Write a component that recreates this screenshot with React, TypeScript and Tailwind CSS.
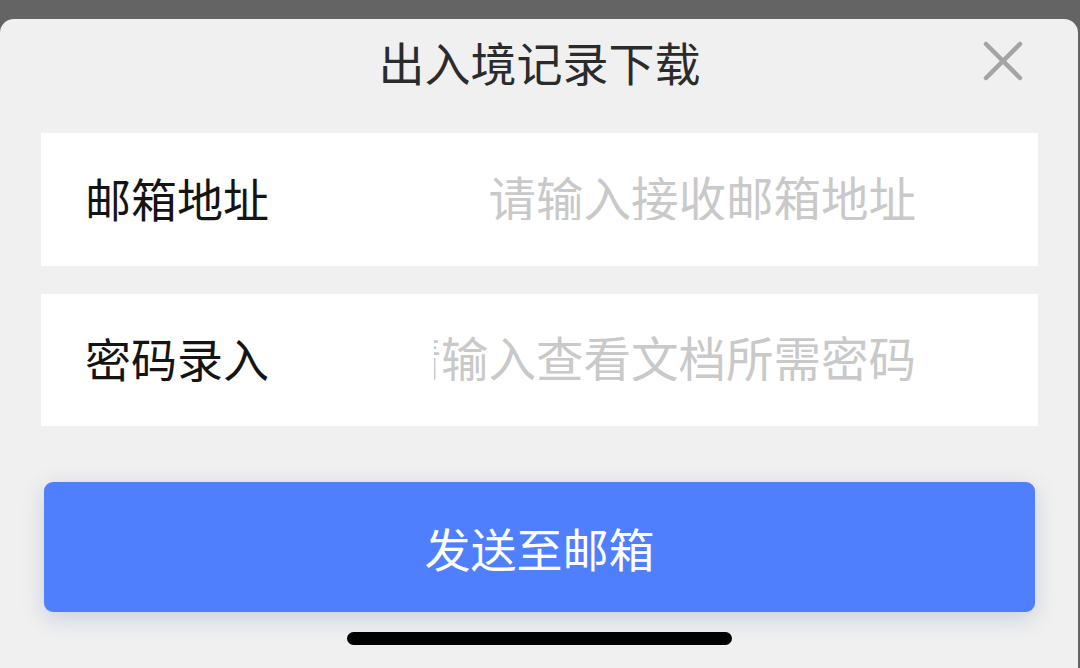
import React from "react";

const font = { fontFamily: '"Noto Sans CJK SC", "Noto Sans", sans-serif' };

function Row({ label, placeholder }: { label: string; placeholder: string }) {
  return (
    <div className="flex items-center bg-white h-full pb-[6px]">
      <div className="pl-[44px] text-[46px] leading-none text-[#141414] whitespace-nowrap">{label}</div>
      <div className="ml-auto mr-[122px] w-[482px] overflow-hidden flex justify-end">
        <span className="text-[47.5px] leading-none text-[#c9c9c9] whitespace-nowrap shrink-0">{placeholder}</span>
      </div>
    </div>
  );
}

export default function App() {
  return (
    <div className="w-[1080px] h-[668px] bg-[#646464] pt-[19px] overflow-hidden" style={font}>
      <div className="w-[1078px] h-[663px] bg-[#f0f0f0] rounded-[14px] pl-[41px] pr-[40px] flex flex-col">
        <div className="h-[84px] relative flex items-center justify-center shrink-0">
          <div className="text-[46px] leading-none text-[#2b2b2b]">出入境记录下载</div>
          <svg
            className="absolute right-[15px] top-[22px]"
            width="40"
            height="40"
            viewBox="0 0 40 40"
          >
            <line x1="3" y1="3" x2="37" y2="37" stroke="#a4a4a4" strokeWidth="4.5" strokeLinecap="round" />
            <line x1="37" y1="3" x2="3" y2="37" stroke="#a4a4a4" strokeWidth="4.5" strokeLinecap="round" />
          </svg>
        </div>
        <div className="mt-[30px] h-[133px] shrink-0">
          <Row label="邮箱地址" placeholder="请输入接收邮箱地址" />
        </div>
        <div className="mt-[28px] h-[132px] shrink-0">
          <Row label="密码录入" placeholder="请输入查看文档所需密码" />
        </div>
        <div className="mt-[56px] mx-[3px] h-[130px] shrink-0 rounded-[9px] bg-[#507ffe] shadow-[0_6px_22px_rgba(70,90,150,0.22)] flex items-center justify-center">
          <span className="text-[46px] leading-none text-white">发送至邮箱</span>
        </div>
        <div className="mt-[20px] self-center w-[385px] h-[13px] rounded-full bg-black shrink-0" />
      </div>
    </div>
  );
}
